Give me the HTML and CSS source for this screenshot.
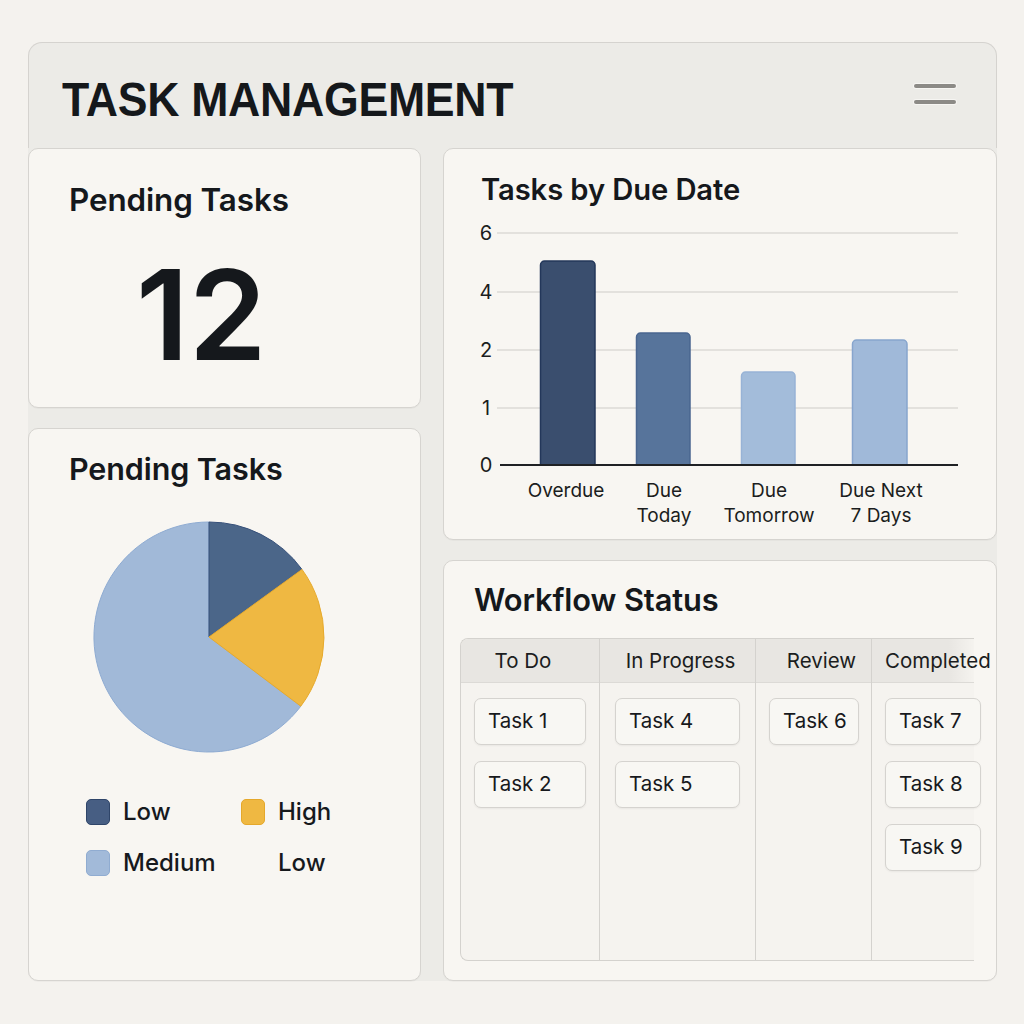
FILE: index.html
```html
<!DOCTYPE html>
<html lang="en">
<head>
<meta charset="utf-8">
<title>Task Management</title>
<link rel="stylesheet" href="styles.css">
</head>
<body>
<div class="panel">
  <header class="header">
    <h1 class="app-title">TASK MANAGEMENT</h1>
    <button class="menu" aria-label="Menu"><span></span><span></span></button>
  </header>
  <div class="grid">
    <div class="column left">
      <section class="card stat">
        <h2 class="card-title t-stat">Pending Tasks</h2>
        <div class="big-number">12</div>
      </section>
      <section class="card pie-card">
        <h2 class="card-title t-pie">Pending Tasks</h2>
        <svg class="pie" width="234" height="234" viewBox="0 0 234 234">
          <path d="M117 117 L208.8 186.2 A115 115 0 1 1 117 2 Z" fill="#a1b9d8" stroke="#8eabd2" stroke-width="1"/>
          <path d="M117 117 L117 2 A115 115 0 0 1 210 49.4 Z" fill="#4b6689" stroke="#36507a" stroke-width="1"/>
          <path d="M117 117 L210 49.4 A115 115 0 0 1 208.8 186.2 Z" fill="#efb842" stroke="#e7aa2c" stroke-width="1"/>
        </svg>
        <div class="legend">
          <div class="legend-item"><span class="swatch sw-low"></span>Low</div>
          <div class="legend-item"><span class="swatch sw-high"></span>High</div>
          <div class="legend-item"><span class="swatch sw-med"></span>Medium</div>
          <div class="legend-item"><span class="swatch sw-none"></span>Low</div>
        </div>
      </section>
    </div>
    <div class="column right">
      <section class="card chart-card">
        <h2 class="card-title t-chart">Tasks by Due Date</h2>
        <svg class="bar-chart" width="551" height="312" viewBox="0 0 551 312">
          <g class="grid-lines" stroke="#dcdad6" stroke-width="1.5">
            <line x1="53" y1="12" x2="514" y2="12"/>
            <line x1="53" y1="71" x2="514" y2="71"/>
            <line x1="53" y1="129" x2="514" y2="129"/>
            <line x1="53" y1="187" x2="514" y2="187"/>
          </g>
          <g class="y-labels" font-family="Inter, 'Noto Sans', sans-serif" font-size="20" fill="#1b1d20" text-anchor="middle">
            <text x="42" y="19">6</text>
            <text x="42" y="78">4</text>
            <text x="42" y="136">2</text>
            <text x="42" y="194">1</text>
            <text x="42" y="251">0</text>
          </g>
          <path d="M96.5 244 V44 a4 4 0 0 1 4 -4 H147 a4 4 0 0 1 4 4 V244" fill="#3a4e6e" stroke="#23375a" stroke-width="1.5"/>
          <path d="M192.5 244 V116 a4 4 0 0 1 4 -4 H242 a4 4 0 0 1 4 4 V244" fill="#57749b" stroke="#4a6690" stroke-width="1.5"/>
          <path d="M297.5 244 V155 a4 4 0 0 1 4 -4 H347 a4 4 0 0 1 4 4 V244" fill="#a3bcda" stroke="#98b3d6" stroke-width="1.5"/>
          <path d="M408.5 244 V123 a4 4 0 0 1 4 -4 H459 a4 4 0 0 1 4 4 V244" fill="#a0b9d9" stroke="#87a5cd" stroke-width="1.5"/>
          <line x1="56" y1="244" x2="514" y2="244" stroke="#1f2124" stroke-width="2"/>
          <g class="x-labels" font-family="Inter, 'Noto Sans', sans-serif" font-size="19" fill="#1b1d20" text-anchor="middle">
            <text x="122" y="276">Overdue</text>
            <text x="220" y="276">Due</text>
            <text x="220" y="301">Today</text>
            <text x="325" y="276">Due</text>
            <text x="325" y="301">Tomorrow</text>
            <text x="437" y="276">Due Next</text>
            <text x="437" y="301">7 Days</text>
          </g>
        </svg>
      </section>
      <section class="card workflow-card">
        <h2 class="card-title t-flow">Workflow Status</h2>
        <div class="board">
          <div class="col col-todo">
            <div class="col-head">To Do</div>
            <div class="col-body">
              <div class="task">Task 1</div>
              <div class="task">Task 2</div>
            </div>
          </div>
          <div class="col col-prog">
            <div class="col-head">In Progress</div>
            <div class="col-body">
              <div class="task">Task 4</div>
              <div class="task">Task 5</div>
            </div>
          </div>
          <div class="col col-review">
            <div class="col-head">Review</div>
            <div class="col-body">
              <div class="task">Task 6</div>
            </div>
          </div>
          <div class="col col-done">
            <div class="col-head">Completed</div>
            <div class="col-body">
              <div class="task">Task 7</div>
              <div class="task">Task 8</div>
              <div class="task">Task 9</div>
            </div>
          </div>
        </div>
      </section>
    </div>
  </div>
</div>
</body>
</html>
```

FILE: styles.css
```css
* { box-sizing: border-box; }

html, body {
  margin: 0;
  padding: 0;
}

body {
  background: #f4f2ee;
  font-family: Inter, "Noto Sans", sans-serif;
  color: #16191d;
  width: 1024px;
  height: 1024px;
  overflow: hidden;
}

.panel {
  margin: 42px 0 0 28px;
  width: 969px;
}

.header {
  height: 106px;
  background: #ecebe7;
  border: 1.5px solid #d5d3cf;
  border-bottom: none;
  border-radius: 14px 14px 0 0;
  display: flex;
  align-items: center;
  justify-content: space-between;
  padding: 8px 40px 0 33px;
}

.app-title {
  margin: 0;
  font-family: "Liberation Sans", Arial, sans-serif;
  font-weight: 700;
  font-size: 48px;
  line-height: 1;
  letter-spacing: -0.3px;
  color: #15181b;
  transform: scaleX(0.93);
  transform-origin: left center;
  white-space: nowrap;
}

.menu {
  background: none;
  border: none;
  padding: 0;
  margin-top: -12px;
  display: flex;
  flex-direction: column;
  gap: 12px;
  width: 42px;
}

.menu span {
  display: block;
  height: 4px;
  width: 42px;
  border-radius: 2px;
  background: #8c8a86;
  box-shadow: 0 0 0 1px #f6f5f2;
}

.grid {
  display: flex;
  gap: 22px;
  background: #ecebe7;
  height: 833px;
  border-radius: 0 0 10px 10px;
}

.column {
  display: flex;
  flex-direction: column;
  gap: 20px;
}

.column.left { width: 393px; }
.column.right { width: 554px; }

.card {
  background: #f8f6f2;
  border: 1.5px solid #d6d4d0;
  border-radius: 10px;
  box-shadow: 0 1px 1px rgba(0,0,0,0.03);
}

.card-title {
  margin: 0;
  font-weight: 600;
  line-height: 36px;
  color: #15181c;
  letter-spacing: -0.1px;
}

/* Stat card */
.stat {
  height: 260px;
  padding: 33px 0 0 40px;
}

.t-stat { font-size: 31.4px; }

.big-number {
  margin: 34px 0 0 67px;
  font-size: 125px;
  font-weight: 600;
  line-height: 1;
  letter-spacing: 0;
  color: #15181c;
}

/* Pie card */
.pie-card {
  flex: 1;
  padding: 22px 0 0 40px;
}

.t-pie { font-size: 30.5px; }

.pie {
  display: block;
  margin: 33px 0 0 23px;
}

.legend {
  margin: 45px 0 0 17px;
  display: grid;
  grid-template-columns: 155px 140px;
  row-gap: 25px;
}

.legend-item {
  display: flex;
  align-items: center;
  gap: 13px;
  font-size: 24px;
  font-weight: 500;
  line-height: 26px;
  color: #16191d;
}

.swatch {
  width: 24px;
  height: 26px;
  border-radius: 5px;
  border: 1.5px solid transparent;
}

.sw-low { background: #475e83; border-color: #2f4569; }
.sw-high { background: #efb842; border-color: #e5a82b; }
.sw-med { background: #a2bad9; border-color: #90acd1; }
.sw-none { background: transparent; border-color: transparent; }

/* Chart card */
.chart-card {
  height: 392px;
  padding: 23px 0 0 0;
}

.t-chart {
  font-size: 29.2px;
  padding-left: 37px;
}

.bar-chart {
  display: block;
  margin-top: 13px;
}

/* Workflow card */
.workflow-card {
  flex: 1;
  padding: 21px 0 0 16px;
}

.t-flow {
  font-size: 30.8px;
  padding-left: 14px;
}

.board {
  margin-top: 20px;
  display: grid;
  grid-template-columns: 138px 156px 116px 103px;
  width: 514px;
  height: 323px;
  border: 1.5px solid #d4d2ce;
  border-right: none;
  border-radius: 8px 0 0 8px;
  background: #f5f3ef;
}

.col {
  display: flex;
  flex-direction: column;
  border-left: 1.5px solid #d4d2ce;
}

.col-todo {
  border-left: none;
}

.col-head {
  height: 44px;
  background: #e8e6e2;
  border-bottom: 1.5px solid #dcdad6;
  font-size: 20.5px;
  line-height: 44px;
  text-align: center;
  color: #1b1d20;
  white-space: nowrap;
}

.col-todo .col-head {
  border-radius: 7px 0 0 0;
  padding-right: 14px;
}

.col-prog .col-head { padding-left: 6px; }
.col-review .col-head { padding-left: 16px; }

.col-done .col-head {
  text-align: left;
  padding-left: 13px;
  background: linear-gradient(to right, #e8e6e2 75%, rgba(232,230,226,0) 100%);
}

.col-body {
  display: flex;
  flex-direction: column;
  gap: 16px;
  padding: 15px 0 0 13px;
}

.col-prog .col-body { padding-left: 15px; }

.task {
  height: 47px;
  border: 1.5px solid #d5d3cf;
  border-radius: 7px;
  background: #f8f7f3;
  box-shadow: 0 1px 2px rgba(0,0,0,0.05);
  font-size: 20.5px;
  line-height: 44px;
  padding-left: 13px;
  color: #17191c;
}

.col-todo .task { width: 112px; }
.col-prog .task { width: 125px; }
.col-review .task { width: 90px; }
.col-done .task { width: 96px; }
```
